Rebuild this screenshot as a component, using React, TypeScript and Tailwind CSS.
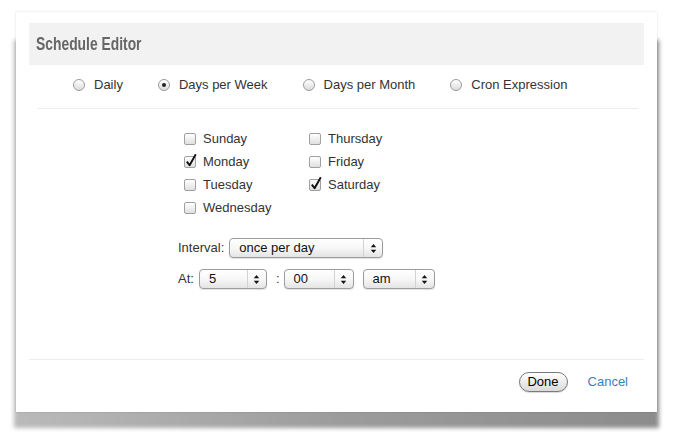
import React from "react";

const font = { fontFamily: '"Liberation Sans", Arial, Helvetica, sans-serif' };

function Radio({ label, checked }: { label: string; checked?: boolean }) {
  return (
    <label className="flex items-center gap-[9px]">
      <span className="relative flex h-[12px] w-[12px] items-center justify-center rounded-full border border-[#9a9a9a] bg-linear-to-b from-white to-[#dcdcdc] shadow-[inset_0_1px_1px_rgba(255,255,255,0.9)]">
        {checked && <span className="h-[4px] w-[4px] rounded-full bg-[#222]" />}
      </span>
      <span className="text-[13px] leading-[16px] text-[#333]">{label}</span>
    </label>
  );
}

function Check({ label, checked }: { label: string; checked?: boolean }) {
  return (
    <div className="flex h-[23px] items-center gap-[7px]">
      <span className="relative inline-block h-[12px] w-[12px] rounded-[2px] border border-[#a0a0a0] bg-linear-to-b from-white to-[#e0e0e0]">
        {checked && (
          <svg className="absolute -top-[4px] left-[0px]" width="13" height="15" viewBox="0 0 13 15">
            <path d="M1.8 8.6 L4.6 12.2 L10.8 1.2" stroke="#111" strokeWidth="1.9" fill="none" strokeLinejoin="round" />
          </svg>
        )}
      </span>
      <span className="text-[13px] leading-[16px] text-[#333]">{label}</span>
    </div>
  );
}

function Arrows() {
  return (
    <svg width="7" height="11" viewBox="0 0 7 11">
      <path d="M0.8 4.3 L3.5 1 L6.2 4.3 Z" fill="#111" />
      <path d="M0.8 6.7 L3.5 10 L6.2 6.7 Z" fill="#111" />
    </svg>
  );
}

function Select({ value, className }: { value: string; className: string }) {
  return (
    <div
      className={
        "flex h-[20px] items-center rounded-[4px] border border-[#9c9c9c] bg-linear-to-b from-white via-[#f7f7f7] to-[#e4e4e4] shadow-[0_1px_1px_rgba(0,0,0,0.12)] " +
        className
      }
    >
      <span className="flex-1 pl-[9px] text-[13px] leading-[16px] text-[#111]">{value}</span>
      <span className="h-[18px] w-px bg-[#d2d2d2]" />
      <span className="flex w-[18px] items-center justify-center">
        <Arrows />
      </span>
    </div>
  );
}

export default function App() {
  return (
    <div className="relative h-[447px] w-[682px] overflow-hidden bg-white pl-[16px] pt-[12px]" style={font}>
      {/* lifted shadow under the card */}
      <div className="absolute left-[14px] top-[40px] h-[388px] w-[645px] bg-linear-to-r from-[#bababa] via-[#9c9c9c] to-[#8c8c8c] blur-[2px]" />

      <div className="relative flex h-[400px] w-[641px] flex-col bg-white shadow-[0_0_2px_rgba(0,0,0,0.15)]">
        <div className="mx-[13px] mt-[11px] flex h-[42px] items-center bg-[#f2f2f2] pl-[7px]">
          <span className="inline-block origin-left scale-x-[0.77] text-[18px] font-bold text-[#666]">
            Schedule Editor
          </span>
        </div>

        <div className="flex gap-[35px] pl-[57px] pt-[12px]">
          <Radio label="Daily" />
          <Radio label="Days per Week" checked />
          <Radio label="Days per Month" />
          <Radio label="Cron Expression" />
        </div>
        <div className="ml-[22px] mr-[19px] mt-[15px] h-px bg-[#ececec]" />

        <div className="h-[250px] pl-[162px] pt-[18px]">
          <div className="grid w-[220px] grid-cols-[125px_1fr] pl-[6px]">
            <div>
              <Check label="Sunday" />
              <Check label="Monday" checked />
              <Check label="Tuesday" />
              <Check label="Wednesday" />
            </div>
            <div>
              <Check label="Thursday" />
              <Check label="Friday" />
              <Check label="Saturday" checked />
            </div>
          </div>

          <div className="mt-[19px] flex items-center gap-[5px]">
            <span className="text-[13px] leading-[16px] text-[#333]">Interval:</span>
            <Select value="once per day" className="w-[154px]" />
          </div>
          <div className="mt-[11px] flex items-center">
            <span className="text-[13px] leading-[16px] text-[#333]">At:</span>
            <Select value="5" className="ml-[5px] w-[68px]" />
            <span className="ml-[9px] text-[13px] leading-[16px] text-[#333]">:</span>
            <Select value="00" className="ml-[4px] w-[70px]" />
            <Select value="am" className="ml-[9px] w-[72px]" />
          </div>
        </div>

        <div className="mx-[13px] h-px bg-[#ececec]" />
        <div className="flex items-center justify-end gap-[20px] pr-[29px] pt-[12px]">
          <button className="flex h-[20px] w-[49px] items-center justify-center rounded-full border border-[#7a7a7a] bg-linear-to-b from-white to-[#dadada] text-[13px] leading-[16px] text-black shadow-[0_1px_1px_rgba(0,0,0,0.15)]">
            Done
          </button>
          <a className="text-[13px] leading-[16px] text-[#3a7fc1]">Cancel</a>
        </div>
      </div>
    </div>
  );
}
